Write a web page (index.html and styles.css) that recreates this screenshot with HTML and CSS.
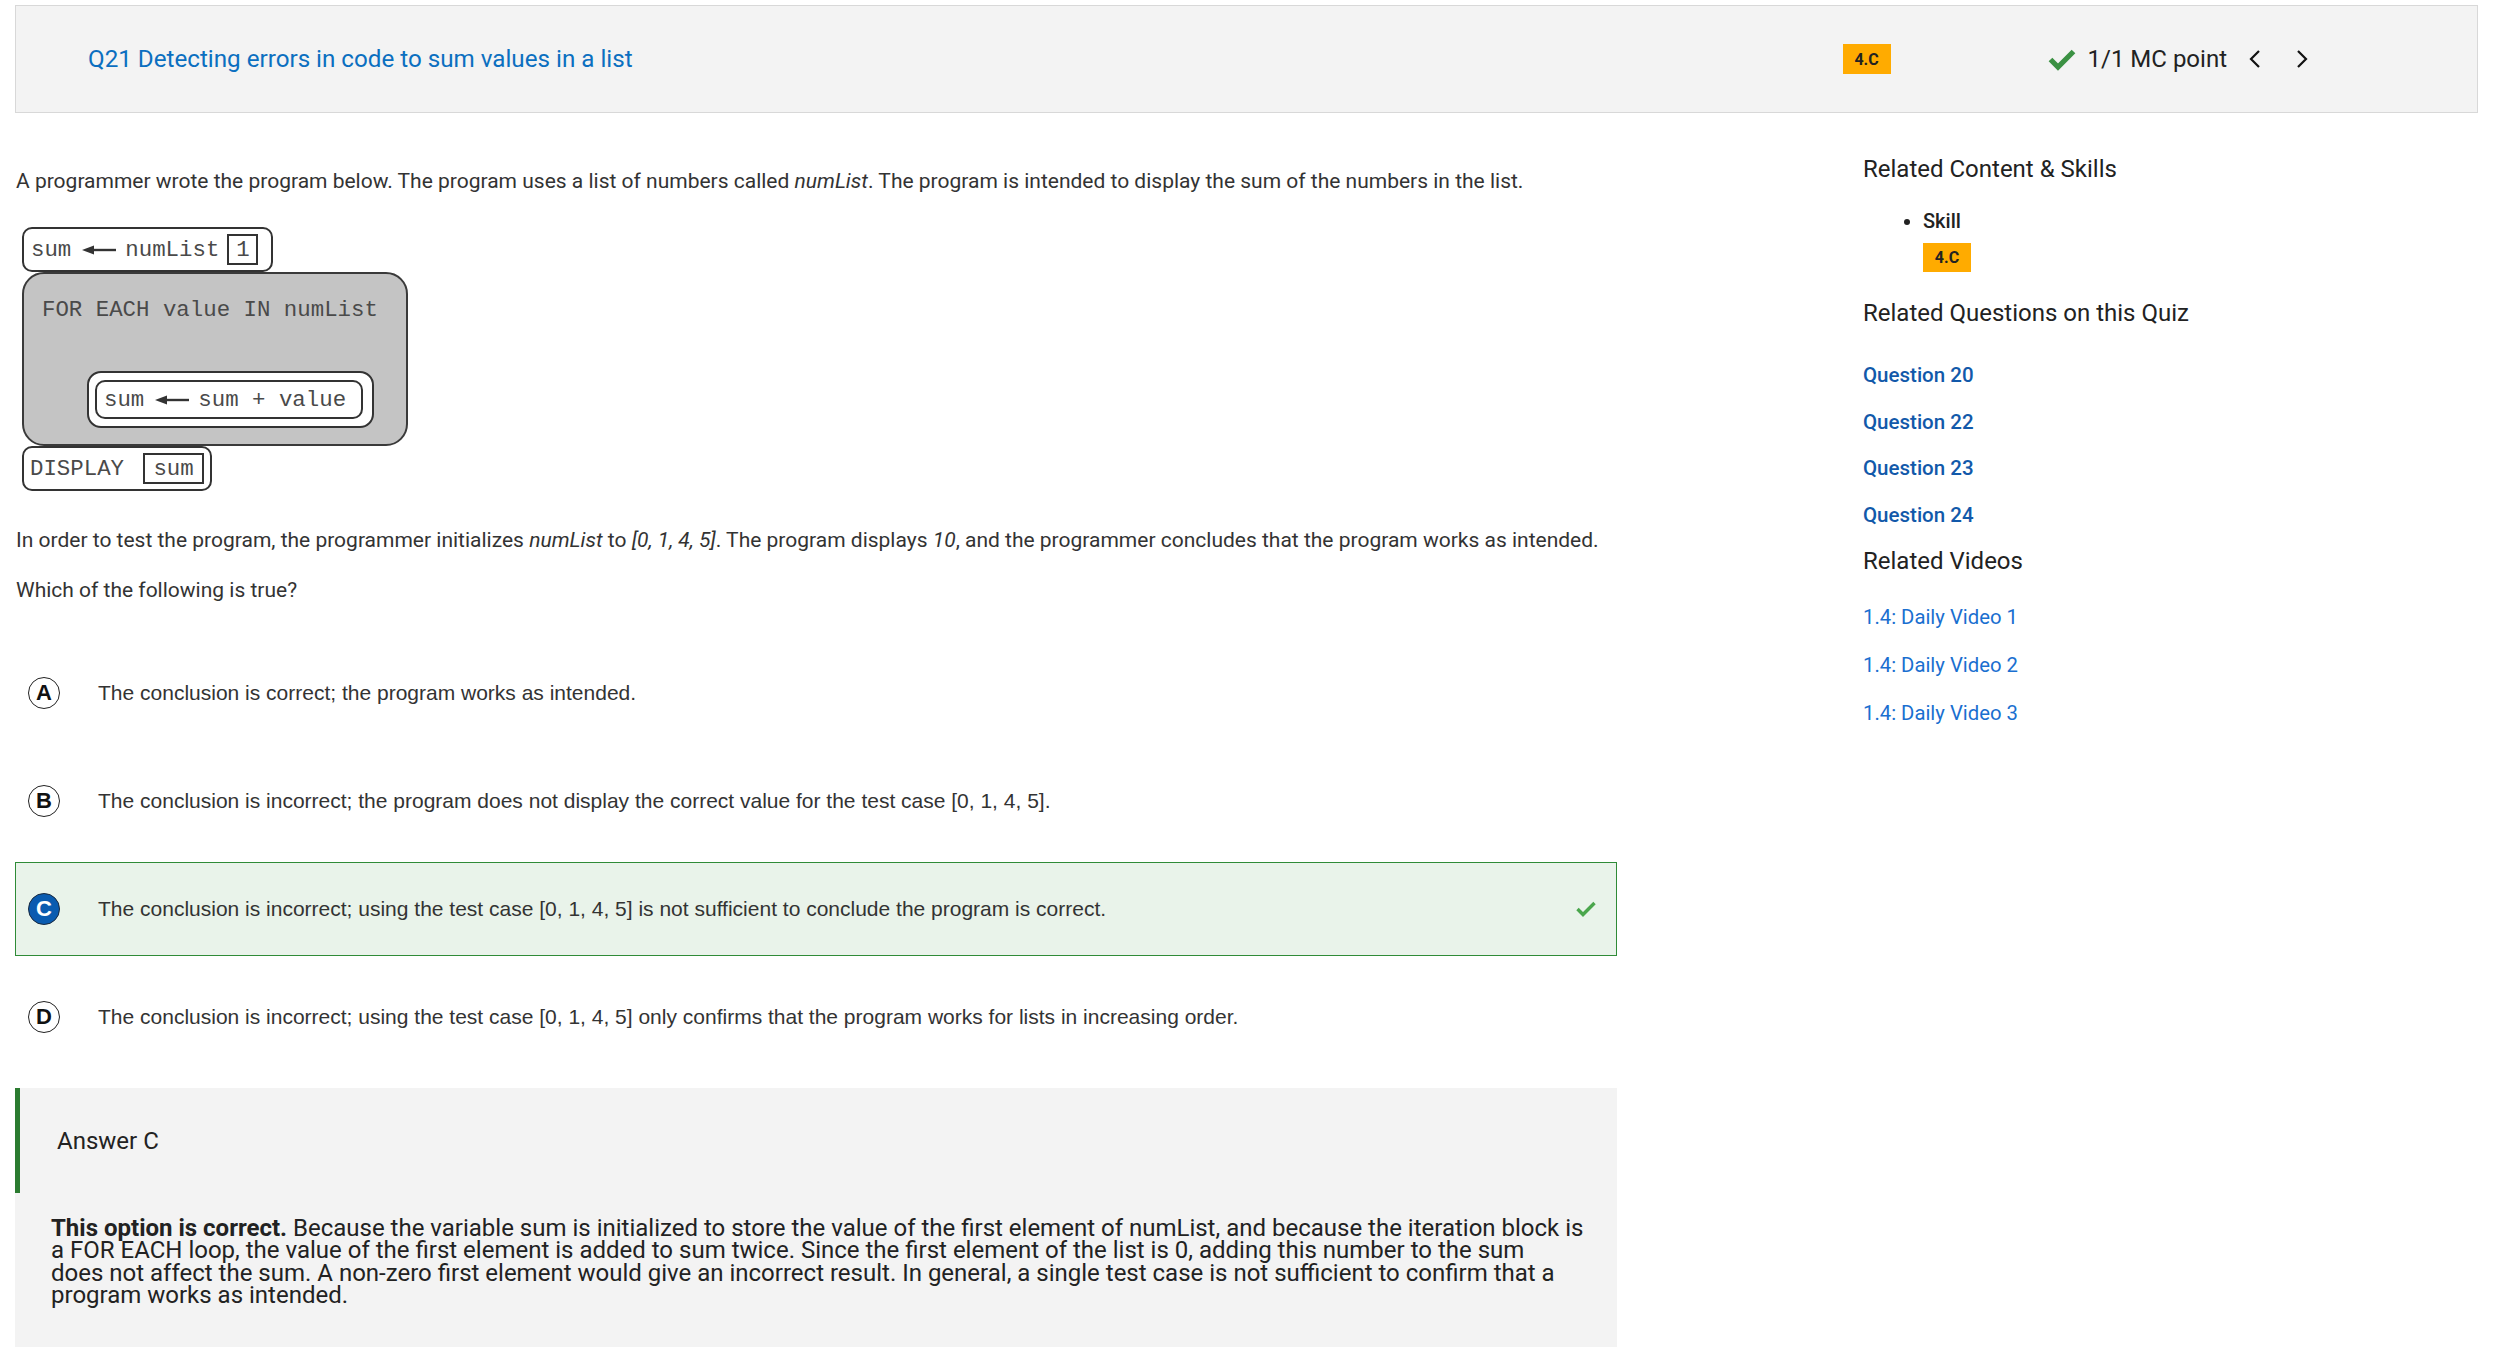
FILE: index.html
```html
<!DOCTYPE html>
<html lang="en">
<head>
<meta charset="utf-8">
<title>Q21 Detecting errors in code to sum values in a list</title>
<link rel="stylesheet" href="styles.css">
</head>
<body>
<header class="qhead">
  <a class="qtitle" href="#">Q21 Detecting errors in code to sum values in a list</a>
  <span class="badge">4.C</span>
  <div class="score">
    <svg class="score-check" width="28" height="24" viewBox="0 0 28 24"><polyline points="2.5,12.5 10,20 25.5,4.5" fill="none" stroke="#3b9143" stroke-width="5.2"/></svg>
    <span class="score-text">1/1 MC point</span>
    <svg class="chev" width="14" height="22" viewBox="0 0 14 22"><polyline points="11,3 3,11 11,19" fill="none" stroke="#111" stroke-width="2.2"/></svg>
    <svg class="chev" width="14" height="22" viewBox="0 0 14 22"><polyline points="3,3 11,11 3,19" fill="none" stroke="#111" stroke-width="2.2"/></svg>
  </div>
</header>

<div class="layout">
  <main class="question">
    <p class="stem first">A programmer wrote the program below. The program uses a list of numbers called <em>numList</em>. The program is intended to display the sum of the numbers in the list.</p>

    <div class="diagram">
      <div class="blk blk-assign">
        <span>sum</span>
        <svg class="arrow" width="34" height="10" viewBox="0 0 34 10"><polygon points="0,5 12,0.5 12,9.5" fill="#333"/><line x1="10" y1="5" x2="34" y2="5" stroke="#333" stroke-width="2.4"/></svg>
        <span>numList</span>
        <span class="slot slot-one">1</span>
      </div>
      <div class="blk-loop">
        <div class="loop-text">FOR EACH value IN numList</div>
        <div class="loop-body">
          <div class="loop-inner">
            <span>sum</span>
            <svg class="arrow" width="34" height="10" viewBox="0 0 34 10"><polygon points="0,5 12,0.5 12,9.5" fill="#333"/><line x1="10" y1="5" x2="34" y2="5" stroke="#333" stroke-width="2.4"/></svg>
            <span>sum + value</span>
          </div>
        </div>
      </div>
      <div class="blk blk-display">
        <span>DISPLAY</span>
        <span class="slot slot-sum">sum</span>
      </div>
    </div>

    <p class="stem second">In order to test the program, the programmer initializes <em>numList</em> to <em>[0, 1, 4, 5]</em>. The program displays <em>10</em>, and the programmer concludes that the program works as intended.</p>
    <p class="stem third">Which of the following is true?</p>

    <ol class="options">
      <li class="opt"><span class="letter">A</span><span class="opt-text">The conclusion is correct; the program works as intended.</span></li>
      <li class="opt"><span class="letter">B</span><span class="opt-text">The conclusion is incorrect; the program does not display the correct value for the test case [0, 1, 4, 5].</span></li>
      <li class="opt opt-correct"><span class="letter">C</span><span class="opt-text">The conclusion is incorrect; using the test case [0, 1, 4, 5] is not sufficient to conclude the program is correct.</span>
        <svg class="opt-check" width="20" height="16" viewBox="0 0 20 16"><polyline points="1.5,8 7,13.5 18.5,2" fill="none" stroke="#4aa64c" stroke-width="3.4"/></svg></li>
      <li class="opt"><span class="letter">D</span><span class="opt-text">The conclusion is incorrect; using the test case [0, 1, 4, 5] only confirms that the program works for lists in increasing order.</span></li>
    </ol>

    <section class="answer">
      <div class="answer-head">Answer C</div>
      <p class="explain"><strong>This option is correct.</strong> Because the variable sum is initialized to store the value of the first element of numList, and because the iteration block is<br>a FOR EACH loop, the value of the first element is added to sum twice. Since the first element of the list is 0, adding this number to the sum<br>does not affect the sum. A non-zero first element would give an incorrect result. In general, a single test case is not sufficient to confirm that a<br>program works as intended.</p>
    </section>
  </main>

  <aside class="side">
    <h3 class="side-h side-h1">Related Content &amp; Skills</h3>
    <ul class="skills">
      <li>Skill</li>
    </ul>
    <span class="badge badge-side">4.C</span>
    <h3 class="side-h side-h2">Related Questions on this Quiz</h3>
    <nav class="qlinks">
      <a href="#">Question 20</a>
      <a href="#">Question 22</a>
      <a href="#">Question 23</a>
      <a href="#">Question 24</a>
    </nav>
    <h3 class="side-h side-h3">Related Videos</h3>
    <nav class="vlinks">
      <a href="#">1.4: Daily Video 1</a>
      <a href="#">1.4: Daily Video 2</a>
      <a href="#">1.4: Daily Video 3</a>
    </nav>
  </aside>
</div>
</body>
</html>
```

FILE: styles.css
```css
* { box-sizing: border-box; }
html, body { margin: 0; background: #fff; }
body {
  padding: 5px 16px 0 15px;
  font-family: Roboto, "Liberation Sans", Arial, sans-serif;
  color: #333;
  overflow: hidden;
}

/* header */
.qhead {
  display: flex;
  align-items: center;
  height: 108px;
  background: #f3f3f3;
  border: 1px solid #d8d8d8;
  padding: 0 168px 0 72px;
}
.qtitle {
  flex: 1;
  font-size: 24.2px;
  color: #0b6fc0;
  text-decoration: none;
}
.badge {
  display: inline-flex;
  align-items: center;
  justify-content: center;
  width: 48px;
  height: 30px;
  background: #ffab00;
  color: #222;
  font-weight: 700;
  font-size: 16px;
}
.score {
  display: flex;
  align-items: center;
  margin-left: 157px;
}
.score-check { margin-right: 12px; }
.score-text { font-size: 24px; color: #222; margin-right: 21px; }
.chev + .chev { margin-left: 33px; }

/* layout */
.layout {
  display: grid;
  grid-template-columns: 1602px 1fr;
  column-gap: 246px;
}

.stem { margin: 0; font-size: 21px; line-height: 30px; padding-left: 1px; }
.stem.first { margin-top: 53px; }
.stem.second { margin-top: 34px; }
.stem.third { margin-top: 20px; }

/* diagram */
.diagram {
  display: flex;
  flex-direction: column;
  align-items: flex-start;
  margin: 31px 0 0 7px;
  font-family: "Liberation Mono", "Courier New", monospace;
  font-size: 22.4px;
  color: #4a4a4a;
}
.blk {
  display: flex;
  align-items: center;
  height: 45px;
  border: 2px solid #333;
  border-radius: 10px;
  background: #fff;
  padding-left: 7px;
}
.blk-assign { width: 251px; }
.blk-assign .arrow { margin: 0 9px 0 11px; }
.slot {
  display: inline-flex;
  align-items: center;
  justify-content: center;
  height: 31px;
  border: 2px solid #333;
}
.slot-one { width: 31px; margin-left: 8px; }
.blk-loop {
  width: 386px;
  height: 174px;
  border: 2px solid #3a3a3a;
  border-radius: 22px;
  background: #c4c4c4;
  padding: 24px 0 0 18px;
}
.loop-text { line-height: 25px; }
.loop-body {
  width: 287px;
  height: 57px;
  margin: 48px 0 0 45px;
  border: 2px solid #333;
  border-radius: 14px;
  background: #fff;
  padding: 7px 0 0 6px;
}
.loop-inner {
  display: flex;
  align-items: center;
  width: 268px;
  height: 39px;
  border: 2px solid #333;
  border-radius: 10px;
  padding-left: 7px;
}
.loop-inner .arrow { margin: 0 9px 0 11px; }
.blk-display { width: 190px; padding-left: 6px; }
.slot-sum { width: 61px; margin-left: 19px; }

/* options */
.options { list-style: none; margin: 41px 0 0; padding: 0; }
.opt {
  display: flex;
  align-items: center;
  height: 94px;
  margin-bottom: 14px;
  border: 1px solid transparent;
  padding-left: 12px;
  padding-right: 20px;
}
.opt:last-child { margin-bottom: 0; }
.letter {
  flex: none;
  display: inline-flex;
  align-items: center;
  justify-content: center;
  width: 32px;
  height: 32px;
  border-radius: 50%;
  border: 1.5px solid #222;
  font-family: "Liberation Sans", Arial, sans-serif;
  font-weight: 700;
  font-size: 22px;
  color: #111;
  background: #fff;
}
.opt-text {
  flex: 1;
  margin-left: 38px;
  font-family: "Liberation Sans", Arial, sans-serif;
  font-size: 21px;
  color: #333;
}
.opt-correct { background: #e9f3ea; border-color: #2f8b37; }
.opt-correct .letter { background: #0a5bb0; color: #fff; border-color: #1a2a40; }

/* answer */
.answer { background: #f3f3f3; margin-top: 24px; padding-bottom: 40px; }
.answer-head {
  display: flex;
  align-items: center;
  height: 105px;
  border-left: 5px solid #2b7b30;
  padding-left: 37px;
  font-size: 24px;
  color: #222;
}
.explain {
  margin: 0;
  padding: 24px 6px 0 36px;
  font-size: 24px;
  line-height: 22.4px;
  color: #222;
}
.explain strong { font-weight: 700; }

/* sidebar */
.side { padding-top: 41px; display: flex; flex-direction: column; align-items: flex-start; }
.side-h { margin: 0; font-size: 24px; font-weight: 400; line-height: 30px; color: #222; }
.skills { margin: 24px 0 0; padding: 0 0 0 60px; font-size: 20px; font-weight: 500; line-height: 26px; color: #222; }
.badge-side { margin: 9px 0 0 60px; height: 29px; }
.side-h2 { margin-top: 26px; }
.qlinks, .vlinks { display: flex; flex-direction: column; align-items: flex-start; }
.qlinks { margin-top: 34px; gap: 20.5px; }
.qlinks a { font-size: 20.5px; font-weight: 500; line-height: 26px; color: #1259aa; text-decoration: none; }
.side-h3 { margin-top: 18.5px; }
.vlinks { margin-top: 28px; gap: 22px; }
.vlinks a { font-size: 20.3px; line-height: 26px; color: #1a6fd0; text-decoration: none; }
```
